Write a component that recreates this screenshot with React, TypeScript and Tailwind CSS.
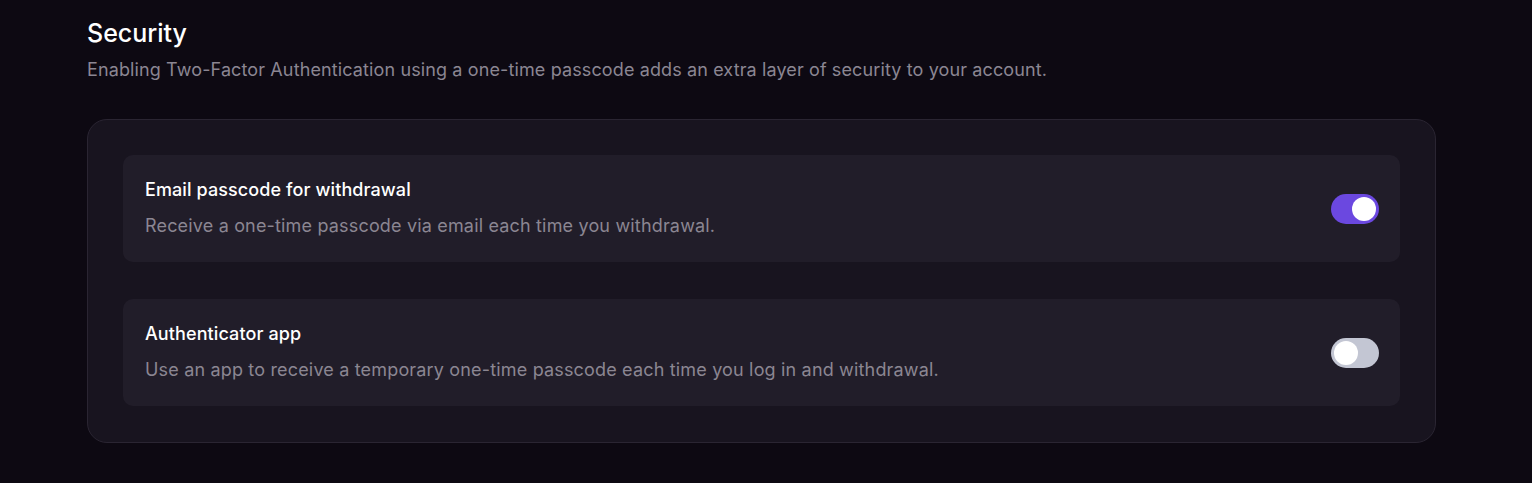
const settings = [
  {
    title: "Email passcode for withdrawal",
    description: "Receive a one-time passcode via email each time you withdrawal.",
    enabled: true,
  },
  {
    title: "Authenticator app",
    description:
      "Use an app to receive a temporary one-time passcode each time you log in and withdrawal.",
    enabled: false,
  },
];

const Toggle = ({ on }: { on: boolean }) => {
  return (
    <div
      className={`flex h-[30px] w-[48px] shrink-0 items-center rounded-full p-[3px] ${
        on ? "justify-end bg-[#6b48e0]" : "justify-start bg-[#c3c6d3]"
      }`}
    >
      <div className="h-[24px] w-[24px] rounded-full bg-white" />
    </div>
  );
};

export default function App() {
  return (
    <div
      className="h-[483px] w-full bg-[#0d0912] px-[87px] pt-[18px]"
      style={{ fontFamily: "Inter, 'Noto Sans', sans-serif" }}
    >
      <h2 className="text-[25px] font-medium leading-[30px] text-white">Security</h2>
      <p className="mt-[10px] text-[18px] leading-[24px] tracking-[0.12px] text-[#8b8692]">
        Enabling Two-Factor Authentication using a one-time passcode adds an extra layer of
        security to your account.
      </p>

      <div className="mt-[37px] flex w-[1349px] flex-col gap-[37px] rounded-[20px] border border-[#2a2532] bg-[#18141f] px-[35px] pt-[35px] pb-[36px]">
        {settings.map((s) => (
          <div
            key={s.title}
            className="flex h-[107px] items-center justify-between rounded-[10px] bg-[#211d29] pl-[22px] pr-[21px]"
          >
            <div className="flex flex-col gap-[12px] pb-[2px]">
              <div className="text-[18px] font-medium leading-[24px] tracking-[0.1px] text-white">
                {s.title}
              </div>
              <div className="text-[18px] leading-[24px] tracking-[0.17px] text-[#8b8692]">
                {s.description}
              </div>
            </div>
            <Toggle on={s.enabled} />
          </div>
        ))}
      </div>
    </div>
  );
}
